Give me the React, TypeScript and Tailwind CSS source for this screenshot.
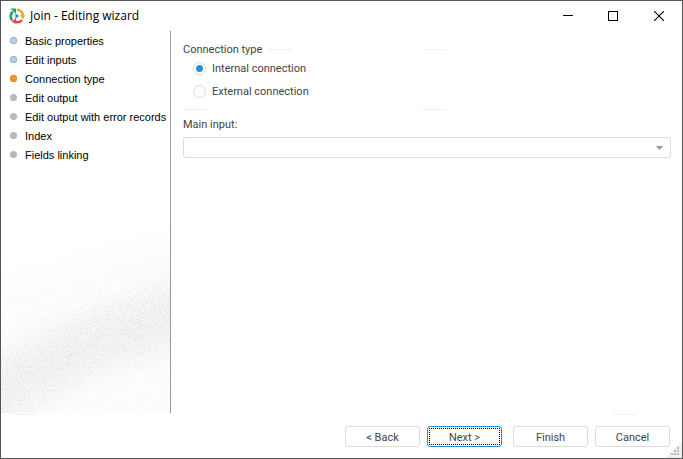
import { useState } from 'react'
import clsx from 'clsx'

type StepState = 'done' | 'current' | 'pending'

const steps: { label: string; state: StepState }[] = [
  { label: 'Basic properties', state: 'done' },
  { label: 'Edit inputs', state: 'done' },
  { label: 'Connection type', state: 'current' },
  { label: 'Edit output', state: 'pending' },
  { label: 'Edit output with error records', state: 'pending' },
  { label: 'Index', state: 'pending' },
  { label: 'Fields linking', state: 'pending' },
]

export default function App(): React.JSX.Element {
  return (
    <div className="relative flex min-h-screen flex-col border border-[#555] bg-white font-['Roboto',sans-serif] text-[11px] leading-4 text-[#444]">
      <TitleBar />
      <div className="flex flex-1">
        <Sidebar />
        <ConnectionForm />
      </div>
      <Footer />
    </div>
  )
}

function TitleBar(): React.JSX.Element {
  return (
    <header className="flex h-[30px] items-center pl-2 text-black">
      <LogoIcon />
      <h1 className="ml-[5px] flex-1 font-['Open_Sans',sans-serif] text-xs">Join - Editing wizard</h1>
      <button aria-label="Minimize" className="flex h-full w-[45px] items-center justify-center hover:bg-gray-200">
        <svg width="10" height="10" shapeRendering="crispEdges">
          <path d="M0 4.5h10" stroke="currentColor" />
        </svg>
      </button>
      <button aria-label="Maximize" className="flex h-full w-[46px] items-center justify-center hover:bg-gray-200">
        <svg width="10" height="10" shapeRendering="crispEdges">
          <path d="M.5.5h9v9h-9z" fill="none" stroke="currentColor" />
        </svg>
      </button>
      <button aria-label="Close" className="flex h-full w-[46px] items-center justify-center hover:bg-gray-200">
        <svg width="10" height="10">
          <path d="M0 0l10 10M10 0L0 10" stroke="currentColor" strokeWidth="1.1" />
        </svg>
      </button>
    </header>
  )
}

function LogoIcon(): React.JSX.Element {
  return (
    <svg width="16" height="16" viewBox="0 0 16 16" fill="none" strokeWidth="2.6">
      <path d="M3.2 12.4A6 6 0 0 1 4 3.6" stroke="#27a567" />
      <path d="M1.4.4h5.6v5.4z" fill="#27a567" />
      <path d="M8 1.8A6 6 0 0 1 14 7.8" stroke="#f2a531" />
      <path d="M10.8 7.2H16l-1.8 4.2z" fill="#f2a531" />
      <path d="M13 12A6 6 0 0 1 6 13.6" stroke="#e54c42" />
      <path d="M7.2 9.8V16L2.6 13.8z" fill="#e54c42" />
      <path d="M6.4 5.2L10.2 8l-3.8 2.8z" fill="#2d91cd" />
    </svg>
  )
}

function Sidebar(): React.JSX.Element {
  return (
    <aside className="relative w-[170px] shrink-0 border-r border-[#999] font-['Liberation_Sans',sans-serif] text-black">
      <SidebarTexture />
      <ol className="relative">
        {steps.map(step => (
          <li
            key={step.label}
            aria-current={step.state === 'current' ? 'step' : undefined}
            className="flex h-[19px] items-center gap-2 pl-[9px] whitespace-nowrap"
          >
            <span
              className={clsx(
                'size-[7px] shrink-0 rounded-full',
                step.state === 'done' && 'bg-[#b9cdf0] ring-1 ring-[#a3afc6] ring-inset',
                step.state === 'current' && 'bg-[#ff9421] ring-1 ring-[#e08a30] ring-inset',
                step.state === 'pending' && 'bg-[#b8b8b8]',
              )}
            />
            {step.label}
          </li>
        ))}
      </ol>
    </aside>
  )
}

// Grainy grey band that rises towards the right edge
function SidebarTexture(): React.JSX.Element {
  return (
    <svg
      aria-hidden="true"
      className="absolute inset-x-0 bottom-0 h-[210px] w-full"
      viewBox="0 0 169 210"
      preserveAspectRatio="none"
    >
      <defs>
        <filter id="grain" x="0" y="0" width="100%" height="100%" colorInterpolationFilters="sRGB">
          <feTurbulence type="fractalNoise" baseFrequency="0.73" numOctaves="3" seed="4" result="noise" />
          <feColorMatrix
            in="noise"
            type="matrix"
            values="0 0 0 0 0.6  0 0 0 0 0.6  0 0 0 0 0.6  6 0 0 0 -2.7"
            result="dots"
          />
          <feComposite in="dots" in2="SourceGraphic" operator="in" />
        </filter>
        <filter id="soften" x="-30%" y="-50%" width="160%" height="200%">
          <feGaussianBlur stdDeviation="13" />
        </filter>
      </defs>
      <g filter="url(#grain)">
        <rect width="169" height="210" fillOpacity="0" />
        <path d="M-40 90L220 20V260H-40z" fillOpacity="0.06" filter="url(#soften)" />
        <path d="M-40 176L70 118L210 66V134L90 170L-40 240z" fillOpacity="0.12" filter="url(#soften)" />
      </g>
      <path d="M-40 176L70 118L210 66V134L90 170L-40 240z" fill="#ccc" fillOpacity="0.18" filter="url(#soften)" />
    </svg>
  )
}

function ConnectionForm(): React.JSX.Element {
  const [type, setType] = useState('internal')

  return (
    <main className="min-w-0 flex-1 pt-[10px] pr-[11px] pl-3">
      <div className="max-w-[263px]">
        <div role="radiogroup" aria-labelledby="connection-type">
          <div className="flex h-4 items-center gap-[6px]">
            <h2 id="connection-type" className="pt-px">
              Connection type
            </h2>
            <Rule />
            <Rule className="ml-auto" />
          </div>
          <div className="flex flex-col gap-[6px] pt-[3px] pl-[10px]">
            <RadioOption label="Internal connection" value="internal" selected={type} onSelect={setType} />
            <RadioOption label="External connection" value="external" selected={type} onSelect={setType} />
          </div>
        </div>
        <div className="mt-[9px] flex justify-between">
          <Rule />
          <Rule />
        </div>
      </div>
      <label htmlFor="main-input" className="mt-[7px] block">
        Main input:
      </label>
      <div className="relative mt-1">
        <select
          id="main-input"
          className="block h-[21px] w-full appearance-none rounded-[3px] border border-[#dcdcdc] bg-white px-1 outline-none focus:border-[#2a8dd4]"
        >
          <option value="" />
        </select>
        <svg width="7" height="4" className="pointer-events-none absolute top-[9px] right-2">
          <path d="M0 0h7L3.5 4z" fill="#999" />
        </svg>
      </div>
    </main>
  )
}

function RadioOption({
  label,
  value,
  selected,
  onSelect,
}: {
  label: string
  value: string
  selected: string
  onSelect: (value: string) => void
}): React.JSX.Element {
  return (
    <label className="flex items-center gap-[6px]">
      <input
        type="radio"
        name="connection"
        value={value}
        checked={selected === value}
        onChange={() => onSelect(value)}
        className="flex size-[13px] appearance-none items-center justify-center rounded-full border border-[#dcdcdc] bg-white before:size-[7px] before:rounded-full checked:before:bg-[#2a8dd4]"
      />
      <span className="pt-px">{label}</span>
    </label>
  )
}

function Rule({ className }: { className?: string }): React.JSX.Element {
  return <span className={clsx('h-px w-6 bg-[#f0f0f0]', className)} />
}

function Footer(): React.JSX.Element {
  return (
    <footer className="pt-px">
      <div className="flex justify-between pr-[45px] pl-3">
        <Rule />
        <Rule />
      </div>
      <div className="flex justify-end pt-[11px] pr-3 pb-[11px]">
        <WizardButton label="< Back" className="mr-[7px]" />
        <WizardButton label="Next >" primary className="mr-[11px]" />
        <WizardButton label="Finish" className="mr-[7px]" />
        <WizardButton label="Cancel" />
      </div>
      <svg width="17" height="17" aria-hidden="true" className="absolute right-0 bottom-0">
        <path d="M17 0v17H0z" fill="#f0f0f0" />
        <path
          d="M12 6h2v2h-2zM9 9h2v2H9zM12 9h2v2h-2zM6 12h2v2H6zM9 12h2v2H9zM12 12h2v2h-2z"
          fill="#bbb"
        />
      </svg>
    </footer>
  )
}

function WizardButton({
  label,
  primary,
  className,
}: {
  label: string
  primary?: boolean
  className?: string
}): React.JSX.Element {
  return (
    <button
      className={clsx(
        'flex h-[21px] w-[75px] rounded-[3px] border bg-white p-px hover:bg-gray-50',
        primary ? 'border-[#2a8dd4]' : 'border-[#dcdcdc]',
        className,
      )}
    >
      <span
        className={clsx(
          'flex h-full w-full items-center justify-center border border-dotted pt-[2px]',
          primary ? 'border-black' : 'border-transparent',
        )}
      >
        {label}
      </span>
    </button>
  )
}
